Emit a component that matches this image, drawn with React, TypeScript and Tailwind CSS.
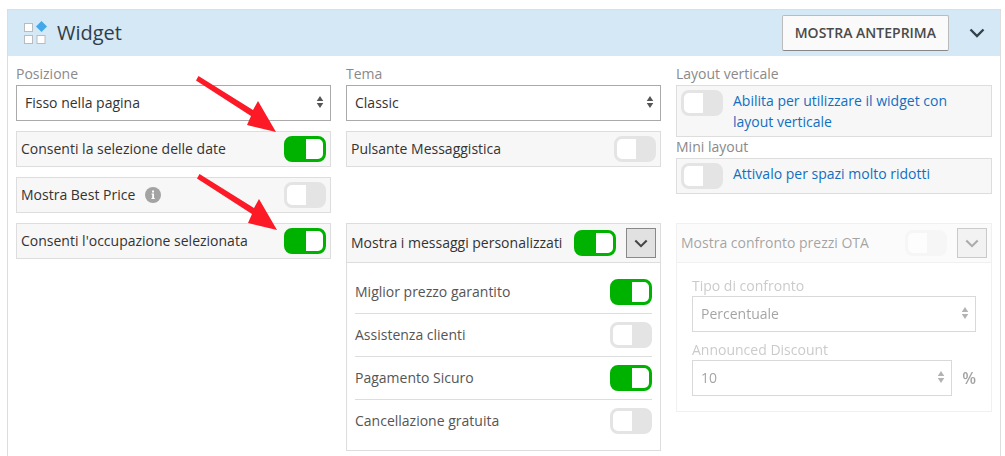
import { useId, useState, type ReactNode } from "react";

function Toggle({ id, label, on = false, disabled = false }: { id?: string; label?: string; on?: boolean; disabled?: boolean }) {
  const [checked, setChecked] = useState(on);
  return (
    <input
      id={id}
      aria-label={label}
      type="checkbox"
      role="switch"
      checked={checked}
      disabled={disabled}
      onChange={(e) => setChecked(e.target.checked)}
      className="h-[26px] w-[42px] shrink-0 appearance-none rounded-lg border-3 border-[#e4e4e4] bg-[linear-gradient(90deg,#fff_19px,#e4e4e4_19px)] checked:border-[#00b200] checked:bg-[linear-gradient(90deg,#00b200_19px,#fff_19px)] disabled:opacity-60"
    />
  );
}

function Sorter() {
  return (
    <svg viewBox="0 0 8 12" className="pointer-events-none absolute top-[11px] right-[7px] h-3 w-2 fill-[#555]" aria-hidden="true">
      <path d="M4 0 L7.3 5 H0.7 Z M4 12 L7.3 7 H0.7 Z" />
    </svg>
  );
}

function Chevron({ className }: { className: string }) {
  return (
    <svg viewBox="0 0 16 10" fill="none" className={className} aria-hidden="true">
      <path d="M1.5 1.5 L8 8 L14.5 1.5" stroke="currentColor" strokeWidth="2.4" />
    </svg>
  );
}

function SelectBox({ id, value, disabled = false }: { id: string; value: string; disabled?: boolean }) {
  return (
    <div className="relative flex-1">
      <select
        id={id}
        disabled={disabled}
        className="block h-9 w-full appearance-none border border-[#aaa] bg-white px-2 text-[#333] opacity-100"
      >
        <option>{value}</option>
      </select>
      <Sorter />
    </div>
  );
}

function FieldLabel({ htmlFor, children }: { htmlFor: string; children: ReactNode }) {
  return (
    <label htmlFor={htmlFor} className="block leading-5 text-[#8a8a8a]">
      {children}
    </label>
  );
}

function ToggleRow({ label, on, info }: { label: string; on?: boolean; info?: boolean }) {
  const id = useId();
  return (
    <div className="flex h-9 items-center border border-[#ddd] bg-[#f7f7f7] px-1">
      <label htmlFor={id}>{label}</label>
      {info && (
        <svg viewBox="0 0 16 16" className="ml-[10px] size-4" role="img" aria-label="Info">
          <circle cx="8" cy="8" r="8" fill="#a3a3a3" />
          <path d="M6.5 6.5 H9 V11 H9.8 V12 H6.4 V11 H7.2 V7.5 H6.5 Z M7.1 3.6 H9 V5.4 H7.1 Z" fill="#fff" />
        </svg>
      )}
      <span className="ml-auto flex">
        <Toggle id={id} on={on} />
      </span>
    </div>
  );
}

function LinkToggle({ label, text }: { label: string; text: string }) {
  const id = useId();
  return (
    <div className="flex flex-col gap-px">
      <FieldLabel htmlFor={id}>{label}</FieldLabel>
      <div className="flex items-start gap-[10px] border border-[#ddd] bg-[#f7f7f7] p-1">
        <Toggle id={id} />
        <a href="#" className="leading-[21px] text-[#116fc2]">
          {text}
        </a>
      </div>
    </div>
  );
}

function Expandable({ title, on, disabled, children }: { title: string; on?: boolean; disabled?: boolean; children: ReactNode }) {
  const id = useId();
  return (
    <section className={disabled ? "self-start border border-[#ddd] opacity-45" : "self-start border border-[#ddd]"}>
      <div className="flex items-center gap-[10px] border-b border-[#ddd] bg-[#f7f7f7] p-1">
        <label htmlFor={id} className="flex-1 whitespace-nowrap">
          {title}
        </label>
        <Toggle id={id} on={on} disabled={disabled} />
        <button
          type="button"
          aria-label="Espandi"
          disabled={disabled}
          className="flex size-[30px] shrink-0 items-center justify-center border border-[#888] bg-[#e1e1e1] text-[#444]"
        >
          <Chevron className="h-[9px] w-[14px]" />
        </button>
      </div>
      {children}
    </section>
  );
}

function MessageRow({ label, on }: { label: string; on?: boolean }) {
  const id = useId();
  return (
    <li className="flex items-center justify-between border-b border-[#ddd] py-2 last:border-b-0">
      <label htmlFor={id} className="text-[#555]">
        {label}
      </label>
      <Toggle id={id} on={on} />
    </li>
  );
}

function Arrow({ className }: { className: string }) {
  return (
    <svg viewBox="0 0 82 58" className={className} aria-hidden="true">
      <path d="M2.5 0 L57 34 L62 25 L80 56 L51 49 L55 40 L0 4.5 Z" fill="#fb1a26" />
    </svg>
  );
}

export default function App() {
  return (
    <div className="min-h-[456px] bg-white pt-[9px] pr-1 pl-[7px] font-['Open_Sans',sans-serif] text-sm text-[#333]">
      <main className="relative min-h-[460px] border border-[#ddd]">
        <header className="flex h-[46px] items-center bg-[#d5e8f6] pr-[15px] pl-4">
          <svg viewBox="0 0 24 24" className="size-6" aria-hidden="true">
            <g fill="#fff" stroke="#b8bcc0">
              <rect x="0.5" y="2.5" width="8" height="8" />
              <rect x="0.5" y="14.5" width="8" height="8" />
              <rect x="13" y="14.5" width="8" height="8" />
            </g>
            <path d="M17.5 0 L23 5.5 L17.5 11 L12 5.5 Z" fill="#43a8ea" />
          </svg>
          <h1 className="ml-[9px] flex-1 text-xl text-[#2f3e4a]">Widget</h1>
          <button
            type="button"
            className="h-9 rounded-xs border border-[#bbb] border-b-[#888] bg-[#fafafa] px-3 font-semibold text-[#4a4a4a]"
          >
            MOSTRA ANTEPRIMA
          </button>
          <button type="button" aria-label="Comprimi" className="ml-5 text-[#34424c]">
            <Chevron className="h-[10px] w-4" />
          </button>
        </header>

        <div className="grid grid-cols-[315fr_315fr_316fr] gap-x-[15px] gap-y-[10px] px-2 pt-2">
          <div className="flex flex-col gap-[10px]">
            <div className="flex flex-col gap-px">
              <FieldLabel htmlFor="posizione">Posizione</FieldLabel>
              <SelectBox id="posizione" value="Fisso nella pagina" />
            </div>
            <ToggleRow label="Consenti la selezione delle date" on />
            <ToggleRow label="Mostra Best Price" info />
          </div>
          <div className="flex flex-col gap-[10px]">
            <div className="flex flex-col gap-px">
              <FieldLabel htmlFor="tema">Tema</FieldLabel>
              <SelectBox id="tema" value="Classic" />
            </div>
            <ToggleRow label="Pulsante Messaggistica" />
          </div>
          <div>
            <LinkToggle label="Layout verticale" text="Abilita per utilizzare il widget con layout verticale" />
            <LinkToggle label="Mini layout" text="Attivalo per spazi molto ridotti" />
          </div>

          <div>
            <ToggleRow label="Consenti l'occupazione selezionata" on />
          </div>
          <Expandable title="Mostra i messaggi personalizzati" on>
            <ul className="p-2">
              <MessageRow label="Miglior prezzo garantito" on />
              <MessageRow label="Assistenza clienti" />
              <MessageRow label="Pagamento Sicuro" on />
              <MessageRow label="Cancellazione gratuita" />
            </ul>
          </Expandable>
          <Expandable title="Mostra confronto prezzi OTA" disabled>
            <div className="flex flex-col gap-2 px-[15px] pt-[13px] pb-[15px]">
              <div>
                <FieldLabel htmlFor="tipo">Tipo di confronto</FieldLabel>
                <SelectBox id="tipo" value="Percentuale" disabled />
              </div>
              <div>
                <FieldLabel htmlFor="sconto">Announced Discount</FieldLabel>
                <div className="flex items-center gap-[10px]">
                  <SelectBox id="sconto" value="10" disabled />
                  <span className="text-base font-semibold">%</span>
                </div>
              </div>
            </div>
          </Expandable>
        </div>

        <Arrow className="pointer-events-none absolute top-[66px] left-[188px] h-[58px] w-[82px]" />
        <Arrow className="pointer-events-none absolute top-[164px] left-[189px] h-[58px] w-[82px]" />
      </main>
    </div>
  );
}
